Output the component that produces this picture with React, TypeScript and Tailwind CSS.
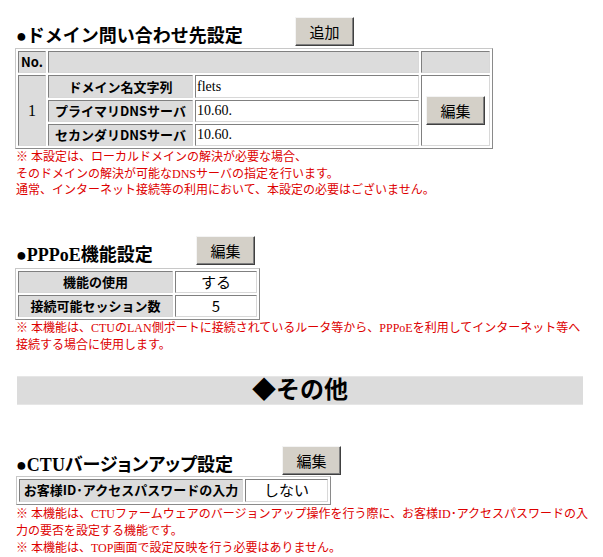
import React from "react";

const serif = "font-['Liberation_Serif','Noto_Sans_CJK_JP',serif]";
const gothic = "font-['Noto_Sans_CJK_JP','Liberation_Sans',sans-serif]";

const tableCls =
  "border-separate border-spacing-[2px] border border-t-[#c8c8c8] border-l-[#c8c8c8] border-b-[#8a8a8a] border-r-[#8a8a8a] bg-white";
const cellBase =
  "p-0 leading-[18px] border border-t-[#808080] border-l-[#808080] border-b-[#d8d8d8] border-r-[#d8d8d8]";
const labelCell = `${cellBase} bg-[#dcdcdc] text-center text-[13px] font-bold text-black ${gothic}`;
const grayCell = `${cellBase} bg-[#dcdcdc]`;
const valueCell = `${cellBase} bg-white text-[14px] text-black ${serif} pl-px`;
const centerValueCell = `${cellBase} bg-white text-center text-[15px] text-black ${gothic}`;

function WinButton({ label }: { label: string }) {
  return (
    <button
      type="button"
      className={`w-[59px] h-[29px] shrink-0 bg-[#d4d0c8] border border-t-[#f4f4f4] border-l-[#f4f4f4] border-b-[#404040] border-r-[#404040] shadow-[inset_-1px_-1px_0_#808080] text-[15px] leading-none text-black ${gothic}`}
    >
      {label}
    </button>
  );
}

function SectionHead({
  title,
  width,
  extra,
}: {
  title: React.ReactNode;
  width: string;
  extra?: string;
}) {
  return (
    <div className="flex items-end h-[29px]">
      <div
        className={`${width} shrink-0 pl-px pb-px text-[18px] leading-[18px] font-bold text-black whitespace-nowrap ${serif} ${extra ?? ""}`}
      >
        {title}
      </div>
      <WinButton label="編集" />
    </div>
  );
}

function Note({ lines, leading }: { lines: string[]; leading: string }) {
  return (
    <div
      className={`pl-px text-[12px] ${leading} text-[#dd0000] whitespace-nowrap ${serif}`}
    >
      {lines.map((l, i) => (
        <div key={i}>{l}</div>
      ))}
    </div>
  );
}

export default function App() {
  return (
    <div className="min-h-screen w-[603px] bg-white pt-[17px] pl-[15px] text-black">
      {/* ドメイン問い合わせ先 */}
      <div className="flex items-end h-[29px]">
        <div
          className={`w-[280px] shrink-0 pl-px pb-px text-[18px] leading-[18px] font-bold whitespace-nowrap ${serif}`}
        >
          ●ドメイン問い合わせ先設定
        </div>
        <WinButton label="追加" />
      </div>
      <table className={`${tableCls} mt-[2px] w-[478px]`}>
        <tbody>
          <tr>
            <td className={`${labelCell} ${serif} h-[22px] w-[28px]`}>No.</td>
            <td className={`${grayCell} w-[371px]`} colSpan={2}></td>
            <td className={`${grayCell} w-[69px]`}></td>
          </tr>
          <tr>
            <td
              rowSpan={3}
              className={`${cellBase} bg-[#dcdcdc] text-center text-[16px] ${serif}`}
            >
              1
            </td>
            <td className={`${labelCell} h-[23px] w-[145px]`}>ドメイン名文字列</td>
            <td className={`${valueCell} w-[224px]`}>flets</td>
            <td rowSpan={3} className={`${cellBase} bg-white`}>
              <div className="flex justify-center">
                <WinButton label="編集" />
              </div>
            </td>
          </tr>
          <tr>
            <td className={`${labelCell} h-[22px]`}>プライマリDNSサーバ</td>
            <td className={valueCell}>10.60.</td>
          </tr>
          <tr>
            <td className={`${labelCell} h-[22px]`}>セカンダリDNSサーバ</td>
            <td className={valueCell}>10.60.</td>
          </tr>
        </tbody>
      </table>
      <Note
        leading="leading-[16.5px]"
        lines={[
          "※ 本設定は、ローカルドメインの解決が必要な場合、",
          "そのドメインの解決が可能なDNSサーバの指定を行います。",
          "通常、インターネット接続等の利用において、本設定の必要はございません。",
        ]}
      />

      {/* PPPoE機能 */}
      <div className="mt-[37px]">
        <SectionHead title="●PPPoE機能設定" width="w-[181px]" />
      </div>
      <table className={`${tableCls} mt-[3px] w-[245px]`}>
        <tbody>
          <tr>
            <td className={`${labelCell} h-[22px] w-[155px]`}>機能の使用</td>
            <td className={`${centerValueCell} w-[82px]`}>する</td>
          </tr>
          <tr>
            <td className={`${labelCell} h-[22px]`}>接続可能セッション数</td>
            <td className={centerValueCell}>5</td>
          </tr>
        </tbody>
      </table>
      <Note
        leading="leading-[17px]"
        lines={[
          "※ 本機能は、CTUのLAN側ポートに接続されているルータ等から、PPPoEを利用してインターネット等へ",
          "接続する場合に使用します。",
        ]}
      />

      {/* その他 */}
      <div
        className={`mt-[22px] ml-[2px] w-[566px] h-[29px] bg-[#dcdcdc] border-y border-[#e6e6e6] flex items-center justify-center text-[24px] leading-none font-bold ${serif}`}
      >
        ◆その他
      </div>

      {/* CTUバージョンアップ */}
      <div className="mt-[41px]">
        <SectionHead
          title="●CTUバージョンアップ設定"
          width="w-[267px]"
          extra="[font-feature-settings:'palt']"
        />
      </div>
      <table className={`${tableCls} mt-px ml-px w-[315px]`}>
        <tbody>
          <tr>
            <td className={`${labelCell} h-[23px] w-[224px]`}>
              お客様ID･アクセスパスワードの入力
            </td>
            <td className={`${centerValueCell} w-[83px]`}>しない</td>
          </tr>
        </tbody>
      </table>
      <div className="mt-px">
        <Note
          leading="leading-[17px]"
          lines={[
            "※ 本機能は、CTUファームウェアのバージョンアップ操作を行う際に、お客様ID･アクセスパスワードの入",
            "力の要否を設定する機能です。",
            "※ 本機能は、TOP画面で設定反映を行う必要はありません。",
          ]}
        />
      </div>
    </div>
  );
}
